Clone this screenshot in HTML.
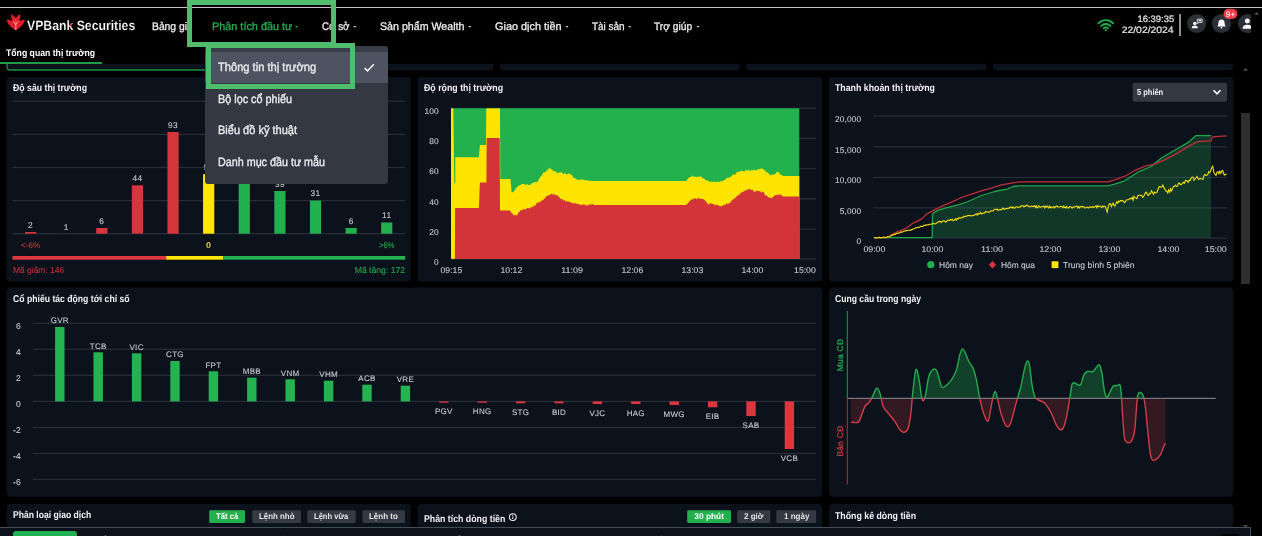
<!DOCTYPE html>
<html><head><meta charset="utf-8"><title>VPBank Securities</title>
<style>
html,body{margin:0;padding:0;background:#000;}
body{width:1262px;height:536px;overflow:hidden;position:relative;font-family:"Liberation Sans", sans-serif;}
.t{position:absolute;white-space:nowrap;line-height:1;font-family:"Liberation Sans", sans-serif;text-rendering:geometricPrecision;}
#main{position:absolute;left:0;top:0;width:1251.2px;height:536px;overflow:hidden;will-change:transform;}
</style></head><body>
<div style="position:absolute;left:0;top:7px;width:1262px;height:1px;background:#c4c4c4"></div>
<div id="main">
<svg style="position:absolute;left:0;top:0" width="1262" height="536" viewBox="0 0 1262 536">
<rect x="7.00" y="40.00" width="239.20" height="30.00" rx="3" fill="#0b121c" stroke="#1c8f40" stroke-width="1.3"/>
<rect x="253.30" y="40.00" width="239.80" height="30.20" rx="3" fill="#0b121c"/>
<rect x="499.90" y="40.00" width="239.80" height="30.20" rx="3" fill="#0b121c"/>
<rect x="746.50" y="40.00" width="239.80" height="30.20" rx="3" fill="#0b121c"/>
<rect x="993.10" y="40.00" width="239.80" height="30.20" rx="3" fill="#0b121c"/>
<rect x="0.00" y="8.00" width="1262.00" height="55.80" fill="#000"/>
<rect x="0.00" y="62.00" width="102.00" height="2.00" fill="#1f9d46"/>
<rect x="6.70" y="77.00" width="404.00" height="204.60" rx="4" fill="#0b121c"/>
<rect x="417.60" y="77.00" width="404.60" height="204.60" rx="4" fill="#0b121c"/>
<rect x="829.00" y="77.00" width="404.30" height="204.60" rx="4" fill="#0b121c"/>
<rect x="6.70" y="287.60" width="815.50" height="209.10" rx="4" fill="#0b121c"/>
<rect x="829.00" y="287.60" width="404.30" height="209.10" rx="4" fill="#0b121c"/>
<rect x="6.70" y="504.00" width="404.00" height="40.00" rx="4" fill="#0b121c"/>
<rect x="417.60" y="504.00" width="404.60" height="40.00" rx="4" fill="#0b121c"/>
<rect x="829.00" y="504.00" width="404.30" height="40.00" rx="4" fill="#0b121c"/>
<rect x="12.50" y="100.55" width="392.50" height="1.30" fill="#262c38"/>
<rect x="12.50" y="133.75" width="392.50" height="1.30" fill="#262c38"/>
<rect x="12.50" y="166.85" width="392.50" height="1.30" fill="#262c38"/>
<rect x="12.50" y="199.95" width="392.50" height="1.30" fill="#262c38"/>
<rect x="12.50" y="233.05" width="392.50" height="1.30" fill="#262c38"/>
<rect x="25.00" y="232.00" width="11.20" height="1.70" fill="#d6353d"/>
<rect x="60.62" y="233.60" width="11.20" height="0.10" fill="#d6353d"/>
<rect x="96.23" y="228.00" width="11.20" height="5.70" fill="#d6353d"/>
<rect x="131.84" y="185.30" width="11.20" height="48.40" fill="#d6353d"/>
<rect x="167.46" y="132.00" width="11.20" height="101.70" fill="#d6353d"/>
<rect x="203.08" y="174.20" width="11.20" height="59.50" fill="#ffe500"/>
<rect x="238.69" y="140.70" width="11.20" height="93.00" fill="#22b04e"/>
<rect x="274.31" y="191.00" width="11.20" height="42.70" fill="#22b04e"/>
<rect x="309.92" y="200.50" width="11.20" height="33.20" fill="#22b04e"/>
<rect x="345.54" y="228.00" width="11.20" height="5.70" fill="#22b04e"/>
<rect x="381.15" y="222.50" width="11.20" height="11.20" fill="#22b04e"/>
<rect x="12.50" y="256.00" width="153.70" height="3.70" fill="#e2363f"/>
<rect x="166.20" y="256.00" width="57.10" height="3.70" fill="#ffe500"/>
<rect x="223.30" y="256.00" width="181.90" height="3.70" fill="#24b350"/>
<rect x="451.00" y="107.65" width="365.00" height="1.30" fill="#262c38"/>
<rect x="451.00" y="137.75" width="365.00" height="1.30" fill="#262c38"/>
<rect x="451.00" y="167.95" width="365.00" height="1.30" fill="#262c38"/>
<rect x="451.00" y="198.25" width="365.00" height="1.30" fill="#262c38"/>
<rect x="451.00" y="228.45" width="365.00" height="1.30" fill="#262c38"/>
<rect x="451.00" y="258.35" width="365.00" height="1.30" fill="#262c38"/>
<rect x="1132.70" y="82.70" width="94.30" height="19.00" rx="2" fill="#343842"/>
<rect x="873.30" y="115.30" width="353.50" height="1.30" fill="#262c38"/>
<rect x="873.30" y="146.20" width="353.50" height="1.30" fill="#262c38"/>
<rect x="873.30" y="176.80" width="353.50" height="1.30" fill="#262c38"/>
<rect x="873.30" y="207.20" width="353.50" height="1.30" fill="#262c38"/>
<rect x="873.30" y="237.40" width="353.50" height="1.30" fill="#262c38"/>
<rect x="33.00" y="322.65" width="783.00" height="1.30" fill="#262c38"/>
<rect x="33.00" y="348.65" width="783.00" height="1.30" fill="#262c38"/>
<rect x="33.00" y="374.65" width="783.00" height="1.30" fill="#262c38"/>
<rect x="33.00" y="400.75" width="783.00" height="1.30" fill="#262c38"/>
<rect x="33.00" y="426.85" width="783.00" height="1.30" fill="#262c38"/>
<rect x="33.00" y="452.85" width="783.00" height="1.30" fill="#262c38"/>
<rect x="33.00" y="478.75" width="783.00" height="1.30" fill="#262c38"/>
<rect x="55.10" y="327.00" width="9.40" height="74.40" fill="#24b350"/>
<rect x="93.50" y="352.30" width="9.40" height="49.10" fill="#24b350"/>
<rect x="131.90" y="353.30" width="9.40" height="48.10" fill="#24b350"/>
<rect x="170.30" y="361.00" width="9.40" height="40.40" fill="#24b350"/>
<rect x="208.70" y="371.30" width="9.40" height="30.10" fill="#24b350"/>
<rect x="247.10" y="377.70" width="9.40" height="23.70" fill="#24b350"/>
<rect x="285.50" y="379.30" width="9.40" height="22.10" fill="#24b350"/>
<rect x="323.90" y="380.70" width="9.40" height="20.70" fill="#24b350"/>
<rect x="362.30" y="384.70" width="9.40" height="16.70" fill="#24b350"/>
<rect x="400.70" y="385.70" width="9.40" height="15.70" fill="#24b350"/>
<rect x="439.10" y="401.40" width="9.40" height="1.30" fill="#dc363f"/>
<rect x="477.50" y="401.40" width="9.40" height="1.30" fill="#dc363f"/>
<rect x="515.90" y="401.40" width="9.40" height="1.90" fill="#dc363f"/>
<rect x="554.30" y="401.40" width="9.40" height="1.90" fill="#dc363f"/>
<rect x="592.70" y="401.40" width="9.40" height="2.60" fill="#dc363f"/>
<rect x="631.10" y="401.40" width="9.40" height="2.60" fill="#dc363f"/>
<rect x="669.50" y="401.40" width="9.40" height="3.60" fill="#dc363f"/>
<rect x="707.90" y="401.40" width="9.40" height="5.90" fill="#dc363f"/>
<rect x="746.30" y="401.40" width="9.40" height="14.60" fill="#dc363f"/>
<rect x="784.70" y="401.40" width="9.40" height="47.60" fill="#dc363f"/>
<rect x="209.20" y="510.30" width="35.80" height="12.60" rx="1.3" fill="#22b04e"/>
<rect x="252.20" y="510.30" width="48.80" height="12.60" rx="1.3" fill="#353943"/>
<rect x="307.20" y="510.30" width="48.60" height="12.60" rx="1.3" fill="#353943"/>
<rect x="362.50" y="510.30" width="42.50" height="12.60" rx="1.3" fill="#353943"/>
<rect x="687.20" y="510.30" width="43.80" height="12.60" rx="1.3" fill="#22b04e"/>
<rect x="737.20" y="510.30" width="33.10" height="12.60" rx="1.3" fill="#353943"/>
<rect x="776.30" y="510.30" width="39.90" height="12.60" rx="1.3" fill="#353943"/>
</svg>
<span class="t" style="left:839.5px;top:354.5px;font-size:8.4px;color:#22a74a;transform:translate(-50%,-50%) rotate(-90deg);letter-spacing:0.3px;-webkit-text-stroke:0.3px;">Mua CĐ</span>
<span class="t" style="left:839.5px;top:441px;font-size:8.4px;color:#c83a42;transform:translate(-50%,-50%) rotate(-90deg);letter-spacing:0.3px;-webkit-text-stroke:0.3px;">Bán CĐ</span>
<svg style="position:absolute;left:0;top:0" width="1262" height="536" viewBox="0 0 1262 536">
<rect x="451" y="108.3" width="348.3" height="150.7" fill="#22b14d"/>
<clipPath id="c2"><rect x="451" y="108.3" width="348.3" height="150.7"/></clipPath><g clip-path="url(#c2)">
<polygon points="450.9,258.7 450.9,108.3 453.3,108.3 454.3,183.2 455.3,183.2 455.3,157.2 478.9,157.2 479.9,144.9 486.0,144.9 486.3,108.3 500.0,108.3 500.3,178.9 510.5,178.9 511.5,191.5 513.2,192.5 514.3,190.7 515.4,189.0 516.5,187.5 517.5,186.9 518.5,185.5 519.5,185.7 520.5,185.0 521.5,183.9 522.5,183.8 523.5,184.1 524.5,184.0 525.5,184.7 526.5,185.1 527.5,184.0 528.5,184.9 529.5,185.0 530.5,184.8 531.5,183.6 532.5,183.0 533.5,182.6 534.5,182.2 535.5,181.9 536.5,182.4 537.6,181.4 538.7,179.8 539.8,177.5 540.9,176.4 542.0,175.2 543.1,172.4 544.2,172.5 545.3,172.0 546.4,170.8 547.5,170.0 548.7,168.8 549.8,167.6 550.8,169.4 551.8,169.0 552.8,170.6 553.8,171.5 555.1,171.2 556.4,172.0 557.5,173.3 558.6,173.1 559.8,172.2 560.9,172.3 562.0,172.6 563.1,174.3 564.1,174.1 565.1,172.8 566.1,174.2 567.1,174.5 568.1,173.8 569.1,173.2 570.1,174.5 571.1,174.5 572.1,175.1 573.1,177.8 574.2,177.8 575.3,178.2 576.4,179.7 577.5,178.9 578.6,180.0 579.7,180.2 580.8,179.2 581.9,179.5 583.0,179.8 584.1,179.8 585.1,180.5 586.2,180.0 587.2,180.4 588.2,179.9 589.3,181.5 590.3,180.5 591.4,180.9 592.0,180.9 686.2,180.9 688.9,177.4 690.0,177.0 691.1,177.0 692.2,175.4 693.4,176.8 694.5,176.4 695.7,176.8 696.9,177.2 697.9,176.2 699.0,177.1 700.1,176.6 701.2,176.2 702.8,178.8 703.8,178.1 704.8,179.2 705.8,180.2 706.8,180.4 707.8,180.5 708.8,181.2 709.8,181.5 710.8,182.2 711.8,181.1 712.8,182.3 713.8,181.6 714.8,181.5 715.8,182.3 716.8,181.7 717.8,181.6 718.8,181.9 719.8,182.1 720.8,181.0 721.8,181.2 722.8,180.9 723.8,180.2 724.8,179.9 725.8,178.8 726.8,178.3 727.8,177.5 728.8,177.9 729.8,176.9 730.8,176.7 731.8,176.3 732.8,174.4 733.8,174.5 734.8,174.8 735.8,174.1 736.8,172.3 737.8,171.8 738.8,172.1 739.8,171.0 740.8,171.0 741.8,170.4 742.8,171.2 743.8,171.3 744.8,171.4 745.8,169.8 746.8,170.8 747.8,170.5 748.8,169.4 749.8,170.8 750.8,170.9 751.8,169.4 752.8,170.8 753.8,169.6 754.8,169.7 755.8,170.7 756.8,170.3 757.8,168.9 758.8,169.3 759.8,169.3 760.7,168.8 761.7,168.4 762.7,168.5 763.7,170.2 764.7,169.7 765.7,171.7 766.7,172.4 767.8,172.3 768.9,173.7 770.0,175.0 771.1,175.6 772.2,174.0 773.3,175.2 774.4,174.1 775.5,174.0 776.6,171.9 777.7,171.7 778.9,172.3 780.0,174.8 781.4,174.6 782.7,175.9 783.4,175.9 800.0,175.9 800.0,258.7" fill="#ffe400"/>
<polygon points="454.9,259.1 455.1,208.1 478.9,208.1 479.9,182.5 486.4,182.5 486.7,137.9 499.7,137.9 500.0,210.5 509.8,210.5 511.5,213.1 512.7,213.8 513.8,215.8 514.9,214.6 516.0,215.5 517.2,215.2 518.5,212.6 519.8,211.5 520.8,210.1 521.8,210.5 522.8,209.4 523.8,209.1 524.8,209.3 525.8,209.8 526.9,208.0 527.9,207.8 529.0,208.2 530.0,208.5 531.0,207.4 532.1,206.6 533.1,207.4 534.1,204.9 535.1,205.9 536.1,204.1 537.1,203.1 538.1,202.4 539.1,202.1 540.1,202.5 541.1,200.5 542.1,200.7 543.1,200.1 544.1,198.8 545.1,198.3 546.1,196.6 547.1,195.8 548.1,195.2 549.2,195.6 550.3,194.6 551.4,193.8 552.4,194.5 553.4,194.3 554.4,194.2 555.4,195.3 556.4,195.2 557.4,195.1 558.4,196.6 559.4,197.3 560.4,198.8 561.4,199.3 562.4,198.9 563.4,200.9 564.4,199.7 565.4,200.8 566.4,202.0 567.5,201.0 568.6,201.9 569.7,201.2 570.8,202.7 572.0,203.1 573.1,203.0 574.1,203.8 575.1,202.8 576.1,203.8 577.1,203.8 578.1,204.0 579.1,203.9 580.0,204.9 581.0,205.3 582.0,204.6 583.0,205.1 584.0,203.9 585.0,205.2 586.0,205.0 587.0,205.7 588.0,205.3 589.0,204.2 590.0,204.4 591.0,204.9 592.0,203.6 593.0,204.5 593.7,205.1 686.2,205.1 688.9,202.1 689.9,200.7 690.9,199.9 691.9,199.0 692.9,199.7 693.9,198.3 694.9,198.4 695.9,198.5 696.9,199.4 697.9,197.7 698.9,198.3 699.9,198.5 700.8,199.1 701.8,198.9 702.8,198.9 704.2,199.4 705.5,201.3 706.7,202.2 707.8,204.3 708.9,204.6 710.1,203.2 711.2,203.5 712.3,203.8 713.4,204.1 714.5,204.8 715.5,205.3 716.5,204.9 717.5,204.6 718.5,205.7 719.5,205.9 720.5,206.0 721.5,206.5 722.5,205.7 723.5,205.1 724.5,205.1 725.5,204.7 726.5,203.0 727.5,204.2 728.5,203.5 729.5,203.2 730.5,202.4 731.5,200.8 732.5,200.1 733.5,198.8 734.5,199.1 735.5,197.2 736.5,196.4 737.5,195.8 738.5,195.0 739.5,194.5 740.4,193.3 741.4,192.5 742.4,192.1 743.4,191.4 744.4,191.2 745.6,189.8 746.7,190.7 747.8,189.4 748.8,188.7 749.8,189.2 750.8,189.7 751.8,190.0 752.8,189.8 753.8,191.4 754.8,191.9 755.8,191.0 756.8,191.3 757.8,190.7 758.8,190.8 759.8,191.5 760.7,191.4 761.7,192.7 762.7,191.5 763.9,192.3 765.0,195.3 766.1,195.6 767.2,195.7 768.3,197.4 769.4,197.2 770.4,197.8 771.4,198.2 772.4,197.5 773.4,196.7 774.4,195.4 775.4,195.2 776.4,194.5 777.4,195.4 778.4,194.6 779.4,194.7 780.5,194.6 781.6,195.2 782.7,196.5 783.4,196.5 800.0,196.5 800.0,259.1" fill="#d2343a"/>
</g>
<polyline points="1213.5,90.3 1217,93.8 1220.5,90.3" fill="none" stroke="#fff" stroke-width="1.6"/>
<polygon points="873.9,237.7 932.2,237.7 932.5,214.1 936.5,210.8 944.8,208.1 958.1,204.8 968.1,201.5 981.4,195.5 994.7,191.5 1008.0,188.8 1013.0,186.5 1019.7,185.8 1107.9,185.8 1114.5,184.2 1124.5,180.8 1137.8,172.2 1151.1,166.5 1161.1,158.2 1171.1,152.2 1181.1,146.5 1189.4,141.6 1196.0,135.6 1211.0,135.6 1211.0,237.7" fill="rgba(34,176,78,0.24)"/>
<polyline points="873.9,237.7 932.2,237.7 932.5,214.1 936.5,210.8 944.8,208.1 958.1,204.8 968.1,201.5 981.4,195.5 994.7,191.5 1008.0,188.8 1013.0,186.5 1019.7,185.8 1107.9,185.8 1114.5,184.2 1124.5,180.8 1137.8,172.2 1151.1,166.5 1161.1,158.2 1171.1,152.2 1181.1,146.5 1189.4,141.6 1196.0,135.6 1211.0,135.6" fill="none" stroke="#20a548" stroke-width="1.3" stroke-linejoin="round"/>
<polyline points="873.9,237.7 886.6,237.7 896.5,232.1 906.5,228.1 913.2,223.1 921.5,219.1 926.5,214.1 931.5,211.4 941.5,206.4 951.5,202.1 961.4,197.5 971.4,194.1 981.4,190.8 991.4,188.1 1001.4,184.8 1011.4,183.2 1019.7,181.8 1107.9,181.8 1117.8,178.8 1126.2,175.5 1136.1,169.8 1146.1,165.8 1154.5,164.2 1164.4,159.9 1174.4,154.9 1184.4,148.9 1191.1,144.9 1197.7,141.6 1211.0,140.9 1212.4,136.9 1226.7,135.9" fill="none" stroke="#c02f38" stroke-width="1.3" stroke-linejoin="round"/>
<polyline points="873.9,237.7 875.0,237.6 876.0,238.1 877.1,238.0 878.1,237.4 879.2,237.2 880.2,238.0 881.3,237.6 882.3,237.7 883.4,237.1 884.5,237.0 885.5,237.6 886.6,237.4 887.6,236.6 888.7,237.0 889.7,236.4 890.8,236.1 891.9,235.0 892.9,235.4 894.0,234.2 895.0,234.6 896.1,233.8 897.2,233.3 898.2,233.1 899.2,233.2 900.3,232.3 901.3,231.9 902.3,232.1 903.3,231.5 904.4,231.1 905.4,230.9 906.4,230.6 907.4,230.5 908.5,230.3 909.5,230.1 910.5,230.3 911.5,229.7 912.5,229.4 913.6,228.8 914.6,228.6 915.6,227.9 916.6,227.8 917.7,227.3 918.7,227.6 919.7,227.1 920.7,226.4 921.8,226.4 922.8,226.5 923.8,225.4 924.8,225.4 925.9,225.1 927.0,224.9 928.1,225.0 929.2,224.4 930.3,224.2 931.4,224.2 932.5,223.8 933.4,223.3 934.2,224.1 935.1,223.7 936.0,223.4 936.9,222.7 937.8,222.4 938.6,221.6 939.5,221.6 940.4,221.3 941.3,222.6 942.2,221.4 943.0,221.0 943.9,220.7 944.8,221.4 945.6,222.0 946.5,221.5 947.3,220.5 948.1,220.2 949.0,220.1 949.8,220.3 950.6,219.5 951.5,220.0 952.3,219.4 953.1,220.7 954.0,220.6 954.8,219.5 955.6,218.7 956.4,220.1 957.3,218.5 958.1,218.8 958.9,217.5 959.8,218.1 960.6,218.1 961.4,218.0 962.3,217.1 963.1,217.6 963.9,216.3 964.8,216.7 965.6,216.1 966.4,216.5 967.3,215.6 968.1,215.3 968.9,215.7 969.8,215.4 970.6,215.9 971.4,215.6 972.3,215.9 973.1,215.5 973.9,215.4 974.8,214.8 975.6,214.3 976.4,214.0 977.2,215.2 978.1,213.2 978.9,214.2 979.7,213.9 980.6,212.4 981.4,213.9 982.2,213.8 983.1,213.0 983.9,213.1 984.7,213.0 985.6,211.4 986.4,212.0 987.2,211.8 988.1,212.3 988.9,212.0 989.7,211.9 990.6,211.2 991.4,210.8 992.2,211.0 993.1,210.9 993.9,209.8 994.7,209.2 995.5,209.3 996.4,209.7 997.2,209.0 998.0,210.4 998.9,209.7 999.7,209.7 1000.5,209.6 1001.4,209.6 1002.2,209.0 1003.0,207.9 1003.9,209.4 1004.7,209.2 1005.5,208.5 1006.4,208.5 1007.2,208.6 1008.0,208.1 1008.9,208.5 1009.7,207.4 1010.5,206.9 1011.4,207.2 1012.2,208.1 1013.0,206.9 1013.9,207.9 1014.7,208.3 1015.5,207.2 1016.3,206.9 1017.2,207.0 1018.0,207.3 1018.8,207.4 1019.7,207.0 1020.5,206.9 1021.3,205.6 1022.2,205.7 1023.0,205.8 1023.8,206.7 1024.7,206.1 1025.5,206.3 1026.3,205.1 1027.2,205.3 1028.0,205.8 1028.8,206.6 1029.7,206.7 1030.5,206.7 1031.3,205.9 1032.2,206.4 1033.0,206.4 1033.8,206.4 1034.7,205.7 1035.5,207.4 1036.3,205.9 1037.1,207.6 1038.0,207.6 1038.8,205.7 1039.6,206.6 1040.5,207.4 1041.3,206.8 1042.1,206.7 1043.0,206.3 1043.8,206.2 1044.6,207.8 1045.5,206.2 1046.3,207.1 1047.1,206.1 1048.0,207.0 1048.8,207.9 1049.6,206.2 1050.5,207.6 1051.3,207.0 1052.1,207.8 1053.0,207.4 1053.8,206.5 1054.6,207.9 1055.4,207.0 1056.3,206.1 1057.1,206.0 1057.9,207.1 1058.8,207.0 1059.6,206.7 1060.4,206.3 1061.3,206.8 1062.1,206.7 1062.9,207.8 1063.8,206.1 1064.6,207.6 1065.4,207.8 1066.3,206.3 1067.1,208.0 1067.9,207.6 1068.8,208.0 1069.6,206.7 1070.4,206.8 1071.3,206.9 1072.1,208.2 1072.9,207.3 1073.8,206.8 1074.6,207.1 1075.4,206.6 1076.2,206.1 1077.1,206.2 1077.9,207.8 1078.7,206.6 1079.6,207.9 1080.4,206.5 1081.2,206.5 1082.1,207.0 1082.9,206.3 1083.7,206.7 1084.6,207.9 1085.4,207.7 1086.2,207.5 1087.1,207.1 1087.9,207.7 1088.7,207.8 1089.6,206.9 1090.4,207.3 1091.2,206.8 1092.1,207.3 1092.9,206.6 1093.7,207.3 1094.6,207.0 1095.4,206.2 1096.2,205.7 1097.0,207.6 1097.9,205.8 1098.7,206.6 1099.5,206.3 1100.4,206.1 1101.2,207.1 1102.0,207.6 1102.9,206.0 1103.7,206.8 1104.5,206.1 1105.4,206.6 1107.2,212.1 1108.5,205.4 1109.5,203.8 1110.4,203.7 1111.3,206.5 1112.3,204.5 1113.2,203.1 1114.1,205.8 1115.0,206.0 1116.0,203.4 1116.9,201.8 1117.8,203.1 1118.8,201.0 1119.7,201.8 1120.7,200.4 1121.6,200.8 1122.6,200.5 1123.6,201.6 1124.5,202.6 1125.5,201.7 1126.4,200.0 1127.4,199.7 1128.3,199.8 1129.3,198.9 1130.2,198.4 1131.2,198.8 1132.1,197.5 1133.1,200.2 1134.0,196.3 1135.0,197.7 1135.9,197.9 1136.9,198.7 1137.8,195.6 1138.8,195.5 1139.7,195.1 1140.7,195.5 1141.6,195.4 1142.6,197.3 1143.5,196.6 1144.5,194.8 1145.5,192.5 1146.5,192.2 1147.5,194.9 1148.5,195.4 1149.5,193.4 1150.5,193.6 1151.5,190.8 1152.5,192.2 1153.5,194.3 1154.5,192.1 1155.6,192.9 1156.7,192.6 1157.8,189.8 1158.8,187.2 1159.8,186.4 1160.8,187.1 1161.8,186.9 1162.8,185.1 1163.8,187.6 1164.8,188.8 1165.8,190.9 1166.8,191.1 1167.8,192.8 1168.7,189.9 1169.7,192.2 1170.6,188.9 1171.6,191.0 1172.5,188.9 1173.5,186.5 1174.4,186.5 1175.4,185.1 1176.4,186.4 1177.4,186.3 1178.4,183.5 1179.4,183.0 1180.4,184.6 1181.4,184.5 1182.4,183.3 1183.4,182.3 1184.4,183.2 1185.4,180.3 1186.3,180.9 1187.3,180.8 1188.2,182.3 1189.2,180.2 1190.1,180.5 1191.1,178.2 1192.1,177.1 1193.1,177.2 1194.1,180.4 1195.0,179.3 1196.0,177.7 1197.0,176.5 1198.0,178.6 1199.0,179.4 1200.0,178.4 1201.0,178.8 1202.0,179.0 1202.9,179.5 1203.9,175.9 1204.8,174.5 1205.8,175.3 1206.7,175.1 1207.7,174.8 1208.7,171.8 1209.7,172.7 1210.7,170.7 1211.7,167.9 1212.7,166.2 1213.9,172.4 1215.0,174.5 1216.0,175.4 1216.9,172.3 1217.9,171.8 1218.8,173.6 1219.8,171.1 1220.8,173.5 1221.7,171.0 1222.7,170.5 1224.3,175.2 1225.5,174.3 1226.7,174.2" fill="none" stroke="#f2dc10" stroke-width="1.1" stroke-linejoin="miter"/>
<circle cx="930.8" cy="264.7" r="3.6" fill="#22b04e"/>
<polygon points="992.5,261 996.2,264.7 992.5,268.4 988.8,264.7" fill="#d6353d"/>
<rect x="1051.6" y="261.3" width="6.8" height="6.8" fill="#ffe500"/>
<clipPath id="up"><rect x="829" y="288" width="404" height="110.30000000000001"/></clipPath><clipPath id="dn"><rect x="829" y="398.3" width="404" height="98.69999999999999"/></clipPath>
<path d="M851.0,422.1 C852.2,422.1 856.5,423.3 858.3,422.1 C860.1,420.9 860.5,417.4 861.6,414.8 C862.7,412.2 863.5,408.7 864.9,406.5 C866.3,404.2 868.5,403.4 869.9,401.5 C871.3,399.5 872.1,397.0 873.3,394.8 C874.4,392.6 875.5,388.4 876.6,388.2 C877.7,387.9 878.8,390.1 879.9,393.2 C881.0,396.2 881.8,403.1 883.2,406.5 C884.6,409.8 886.3,410.6 888.2,413.1 C890.2,415.6 892.9,418.7 894.9,421.4 C896.8,424.2 898.3,427.9 899.9,429.8 C901.4,431.6 902.8,432.7 904.2,432.4 C905.6,432.1 907.1,431.3 908.2,428.1 C909.3,424.9 910.1,418.7 910.9,413.1 C911.6,407.6 911.9,401.2 912.5,394.8 C913.2,388.4 914.2,379.1 914.9,374.9 C915.5,370.6 915.8,369.0 916.5,369.5 C917.2,370.1 918.0,373.7 918.8,378.2 C919.7,382.7 920.7,392.7 921.5,396.5 C922.3,400.3 922.8,401.1 923.5,400.8 C924.2,400.5 924.6,398.9 925.5,394.8 C926.4,390.8 927.7,380.6 928.8,376.5 C929.9,372.4 931.0,371.4 932.2,370.2 C933.3,369.0 934.8,368.7 935.8,369.5 C936.8,370.3 937.2,372.0 938.1,374.9 C939.1,377.7 940.4,384.6 941.5,386.5 C942.6,388.4 943.1,387.6 944.8,386.5 C946.5,385.4 949.5,382.6 951.5,379.8 C953.4,377.1 955.1,374.0 956.4,369.9 C957.8,365.7 958.8,358.4 959.8,354.9 C960.8,351.4 961.5,349.2 962.4,348.9 C963.4,348.6 964.4,351.1 965.4,353.2 C966.5,355.3 967.5,359.0 968.8,361.5 C970.0,364.0 971.8,365.1 973.1,368.2 C974.4,371.2 975.3,374.9 976.4,379.8 C977.5,384.8 978.6,392.9 979.7,398.1 C980.9,403.4 982.0,407.9 983.1,411.5 C984.2,415.1 985.5,418.4 986.4,419.8 C987.3,421.2 987.9,422.3 988.7,419.8 C989.6,417.3 990.5,409.2 991.4,404.8 C992.3,400.4 993.3,395.3 994.1,393.2 C994.8,391.0 995.2,391.3 995.7,392.2 C996.3,393.0 996.4,394.4 997.4,398.1 C998.3,401.9 1000.0,410.3 1001.4,414.8 C1002.7,419.2 1004.3,422.8 1005.4,424.8 C1006.5,426.8 1007.1,427.0 1008.0,426.8 C1008.9,426.5 1009.6,426.2 1010.7,423.1 C1011.8,420.0 1013.5,412.6 1014.7,408.1 C1015.9,403.7 1016.9,400.4 1018.0,396.5 C1019.1,392.6 1020.2,389.5 1021.3,384.8 C1022.4,380.1 1023.7,372.2 1024.7,368.2 C1025.7,364.2 1026.5,361.2 1027.3,360.9 C1028.2,360.6 1028.9,362.5 1029.7,366.5 C1030.4,370.5 1031.2,379.8 1032.0,384.8 C1032.8,389.8 1033.7,394.0 1034.7,396.5 C1035.6,399.0 1036.3,398.7 1038.0,399.8 C1039.6,400.9 1042.4,400.9 1044.6,403.1 C1046.9,405.4 1049.3,409.5 1051.3,413.1 C1053.2,416.7 1054.7,422.0 1056.3,424.8 C1057.8,427.5 1059.3,429.5 1060.6,429.8 C1061.9,430.0 1062.8,429.2 1063.9,426.4 C1065.0,423.7 1066.2,418.4 1067.3,413.1 C1068.3,407.9 1069.5,399.5 1070.3,394.8 C1071.0,390.1 1071.3,386.8 1071.9,384.8 C1072.5,382.8 1073.0,382.9 1073.9,382.8 C1074.8,382.7 1076.1,383.8 1077.2,384.2 C1078.4,384.5 1079.5,386.4 1080.6,384.8 C1081.7,383.3 1082.8,377.1 1083.9,374.9 C1085.0,372.6 1085.7,372.1 1087.2,371.5 C1088.7,371.0 1091.4,372.2 1092.9,371.5 C1094.4,370.9 1095.1,368.6 1096.2,367.5 C1097.3,366.4 1098.6,363.9 1099.5,364.9 C1100.5,365.8 1101.0,368.7 1101.9,373.2 C1102.7,377.6 1103.7,387.4 1104.5,391.5 C1105.4,395.5 1106.0,397.2 1106.9,397.5 C1107.7,397.8 1108.5,395.0 1109.5,393.2 C1110.5,391.3 1111.6,387.8 1112.9,386.5 C1114.1,385.2 1116.0,385.7 1117.2,385.5 C1118.4,385.3 1119.5,383.4 1120.2,385.5 C1120.9,387.6 1121.1,392.7 1121.5,398.1 C1121.9,403.6 1122.3,411.5 1122.8,418.1 C1123.3,424.8 1123.8,434.0 1124.5,438.1 C1125.2,442.1 1126.1,441.8 1127.2,442.4 C1128.3,443.0 1129.9,443.2 1131.2,441.4 C1132.4,439.6 1133.6,437.0 1134.5,431.4 C1135.4,425.9 1135.9,414.2 1136.5,408.1 C1137.0,402.0 1137.2,397.4 1137.8,394.8 C1138.4,392.2 1139.3,392.5 1140.1,392.5 C1141.0,392.5 1142.0,392.8 1142.8,394.8 C1143.6,396.9 1144.3,398.7 1145.1,404.8 C1146.0,410.9 1146.9,423.1 1147.8,431.4 C1148.7,439.7 1149.6,449.9 1150.5,454.7 C1151.3,459.5 1151.8,459.3 1152.8,460.0 C1153.7,460.8 1154.8,460.3 1156.1,459.4 C1157.4,458.5 1159.2,456.9 1160.4,454.7 C1161.7,452.6 1162.9,448.3 1163.8,446.4 C1164.6,444.5 1165.2,443.6 1165.4,443.1 L1165.4,398.3 L851.0,398.3 Z" fill="rgba(34,176,78,0.30)" clip-path="url(#up)"/>
<line x1="847.3" y1="398.3" x2="1215.7" y2="398.3" stroke="#747a83" stroke-width="1.2"/>
<path d="M851.0,422.1 C852.2,422.1 856.5,423.3 858.3,422.1 C860.1,420.9 860.5,417.4 861.6,414.8 C862.7,412.2 863.5,408.7 864.9,406.5 C866.3,404.2 868.5,403.4 869.9,401.5 C871.3,399.5 872.1,397.0 873.3,394.8 C874.4,392.6 875.5,388.4 876.6,388.2 C877.7,387.9 878.8,390.1 879.9,393.2 C881.0,396.2 881.8,403.1 883.2,406.5 C884.6,409.8 886.3,410.6 888.2,413.1 C890.2,415.6 892.9,418.7 894.9,421.4 C896.8,424.2 898.3,427.9 899.9,429.8 C901.4,431.6 902.8,432.7 904.2,432.4 C905.6,432.1 907.1,431.3 908.2,428.1 C909.3,424.9 910.1,418.7 910.9,413.1 C911.6,407.6 911.9,401.2 912.5,394.8 C913.2,388.4 914.2,379.1 914.9,374.9 C915.5,370.6 915.8,369.0 916.5,369.5 C917.2,370.1 918.0,373.7 918.8,378.2 C919.7,382.7 920.7,392.7 921.5,396.5 C922.3,400.3 922.8,401.1 923.5,400.8 C924.2,400.5 924.6,398.9 925.5,394.8 C926.4,390.8 927.7,380.6 928.8,376.5 C929.9,372.4 931.0,371.4 932.2,370.2 C933.3,369.0 934.8,368.7 935.8,369.5 C936.8,370.3 937.2,372.0 938.1,374.9 C939.1,377.7 940.4,384.6 941.5,386.5 C942.6,388.4 943.1,387.6 944.8,386.5 C946.5,385.4 949.5,382.6 951.5,379.8 C953.4,377.1 955.1,374.0 956.4,369.9 C957.8,365.7 958.8,358.4 959.8,354.9 C960.8,351.4 961.5,349.2 962.4,348.9 C963.4,348.6 964.4,351.1 965.4,353.2 C966.5,355.3 967.5,359.0 968.8,361.5 C970.0,364.0 971.8,365.1 973.1,368.2 C974.4,371.2 975.3,374.9 976.4,379.8 C977.5,384.8 978.6,392.9 979.7,398.1 C980.9,403.4 982.0,407.9 983.1,411.5 C984.2,415.1 985.5,418.4 986.4,419.8 C987.3,421.2 987.9,422.3 988.7,419.8 C989.6,417.3 990.5,409.2 991.4,404.8 C992.3,400.4 993.3,395.3 994.1,393.2 C994.8,391.0 995.2,391.3 995.7,392.2 C996.3,393.0 996.4,394.4 997.4,398.1 C998.3,401.9 1000.0,410.3 1001.4,414.8 C1002.7,419.2 1004.3,422.8 1005.4,424.8 C1006.5,426.8 1007.1,427.0 1008.0,426.8 C1008.9,426.5 1009.6,426.2 1010.7,423.1 C1011.8,420.0 1013.5,412.6 1014.7,408.1 C1015.9,403.7 1016.9,400.4 1018.0,396.5 C1019.1,392.6 1020.2,389.5 1021.3,384.8 C1022.4,380.1 1023.7,372.2 1024.7,368.2 C1025.7,364.2 1026.5,361.2 1027.3,360.9 C1028.2,360.6 1028.9,362.5 1029.7,366.5 C1030.4,370.5 1031.2,379.8 1032.0,384.8 C1032.8,389.8 1033.7,394.0 1034.7,396.5 C1035.6,399.0 1036.3,398.7 1038.0,399.8 C1039.6,400.9 1042.4,400.9 1044.6,403.1 C1046.9,405.4 1049.3,409.5 1051.3,413.1 C1053.2,416.7 1054.7,422.0 1056.3,424.8 C1057.8,427.5 1059.3,429.5 1060.6,429.8 C1061.9,430.0 1062.8,429.2 1063.9,426.4 C1065.0,423.7 1066.2,418.4 1067.3,413.1 C1068.3,407.9 1069.5,399.5 1070.3,394.8 C1071.0,390.1 1071.3,386.8 1071.9,384.8 C1072.5,382.8 1073.0,382.9 1073.9,382.8 C1074.8,382.7 1076.1,383.8 1077.2,384.2 C1078.4,384.5 1079.5,386.4 1080.6,384.8 C1081.7,383.3 1082.8,377.1 1083.9,374.9 C1085.0,372.6 1085.7,372.1 1087.2,371.5 C1088.7,371.0 1091.4,372.2 1092.9,371.5 C1094.4,370.9 1095.1,368.6 1096.2,367.5 C1097.3,366.4 1098.6,363.9 1099.5,364.9 C1100.5,365.8 1101.0,368.7 1101.9,373.2 C1102.7,377.6 1103.7,387.4 1104.5,391.5 C1105.4,395.5 1106.0,397.2 1106.9,397.5 C1107.7,397.8 1108.5,395.0 1109.5,393.2 C1110.5,391.3 1111.6,387.8 1112.9,386.5 C1114.1,385.2 1116.0,385.7 1117.2,385.5 C1118.4,385.3 1119.5,383.4 1120.2,385.5 C1120.9,387.6 1121.1,392.7 1121.5,398.1 C1121.9,403.6 1122.3,411.5 1122.8,418.1 C1123.3,424.8 1123.8,434.0 1124.5,438.1 C1125.2,442.1 1126.1,441.8 1127.2,442.4 C1128.3,443.0 1129.9,443.2 1131.2,441.4 C1132.4,439.6 1133.6,437.0 1134.5,431.4 C1135.4,425.9 1135.9,414.2 1136.5,408.1 C1137.0,402.0 1137.2,397.4 1137.8,394.8 C1138.4,392.2 1139.3,392.5 1140.1,392.5 C1141.0,392.5 1142.0,392.8 1142.8,394.8 C1143.6,396.9 1144.3,398.7 1145.1,404.8 C1146.0,410.9 1146.9,423.1 1147.8,431.4 C1148.7,439.7 1149.6,449.9 1150.5,454.7 C1151.3,459.5 1151.8,459.3 1152.8,460.0 C1153.7,460.8 1154.8,460.3 1156.1,459.4 C1157.4,458.5 1159.2,456.9 1160.4,454.7 C1161.7,452.6 1162.9,448.3 1163.8,446.4 C1164.6,444.5 1165.2,443.6 1165.4,443.1 L1165.4,398.3 L851.0,398.3 Z" fill="rgba(214,53,61,0.20)" clip-path="url(#dn)"/>
<path d="M851.0,422.1 C852.2,422.1 856.5,423.3 858.3,422.1 C860.1,420.9 860.5,417.4 861.6,414.8 C862.7,412.2 863.5,408.7 864.9,406.5 C866.3,404.2 868.5,403.4 869.9,401.5 C871.3,399.5 872.1,397.0 873.3,394.8 C874.4,392.6 875.5,388.4 876.6,388.2 C877.7,387.9 878.8,390.1 879.9,393.2 C881.0,396.2 881.8,403.1 883.2,406.5 C884.6,409.8 886.3,410.6 888.2,413.1 C890.2,415.6 892.9,418.7 894.9,421.4 C896.8,424.2 898.3,427.9 899.9,429.8 C901.4,431.6 902.8,432.7 904.2,432.4 C905.6,432.1 907.1,431.3 908.2,428.1 C909.3,424.9 910.1,418.7 910.9,413.1 C911.6,407.6 911.9,401.2 912.5,394.8 C913.2,388.4 914.2,379.1 914.9,374.9 C915.5,370.6 915.8,369.0 916.5,369.5 C917.2,370.1 918.0,373.7 918.8,378.2 C919.7,382.7 920.7,392.7 921.5,396.5 C922.3,400.3 922.8,401.1 923.5,400.8 C924.2,400.5 924.6,398.9 925.5,394.8 C926.4,390.8 927.7,380.6 928.8,376.5 C929.9,372.4 931.0,371.4 932.2,370.2 C933.3,369.0 934.8,368.7 935.8,369.5 C936.8,370.3 937.2,372.0 938.1,374.9 C939.1,377.7 940.4,384.6 941.5,386.5 C942.6,388.4 943.1,387.6 944.8,386.5 C946.5,385.4 949.5,382.6 951.5,379.8 C953.4,377.1 955.1,374.0 956.4,369.9 C957.8,365.7 958.8,358.4 959.8,354.9 C960.8,351.4 961.5,349.2 962.4,348.9 C963.4,348.6 964.4,351.1 965.4,353.2 C966.5,355.3 967.5,359.0 968.8,361.5 C970.0,364.0 971.8,365.1 973.1,368.2 C974.4,371.2 975.3,374.9 976.4,379.8 C977.5,384.8 978.6,392.9 979.7,398.1 C980.9,403.4 982.0,407.9 983.1,411.5 C984.2,415.1 985.5,418.4 986.4,419.8 C987.3,421.2 987.9,422.3 988.7,419.8 C989.6,417.3 990.5,409.2 991.4,404.8 C992.3,400.4 993.3,395.3 994.1,393.2 C994.8,391.0 995.2,391.3 995.7,392.2 C996.3,393.0 996.4,394.4 997.4,398.1 C998.3,401.9 1000.0,410.3 1001.4,414.8 C1002.7,419.2 1004.3,422.8 1005.4,424.8 C1006.5,426.8 1007.1,427.0 1008.0,426.8 C1008.9,426.5 1009.6,426.2 1010.7,423.1 C1011.8,420.0 1013.5,412.6 1014.7,408.1 C1015.9,403.7 1016.9,400.4 1018.0,396.5 C1019.1,392.6 1020.2,389.5 1021.3,384.8 C1022.4,380.1 1023.7,372.2 1024.7,368.2 C1025.7,364.2 1026.5,361.2 1027.3,360.9 C1028.2,360.6 1028.9,362.5 1029.7,366.5 C1030.4,370.5 1031.2,379.8 1032.0,384.8 C1032.8,389.8 1033.7,394.0 1034.7,396.5 C1035.6,399.0 1036.3,398.7 1038.0,399.8 C1039.6,400.9 1042.4,400.9 1044.6,403.1 C1046.9,405.4 1049.3,409.5 1051.3,413.1 C1053.2,416.7 1054.7,422.0 1056.3,424.8 C1057.8,427.5 1059.3,429.5 1060.6,429.8 C1061.9,430.0 1062.8,429.2 1063.9,426.4 C1065.0,423.7 1066.2,418.4 1067.3,413.1 C1068.3,407.9 1069.5,399.5 1070.3,394.8 C1071.0,390.1 1071.3,386.8 1071.9,384.8 C1072.5,382.8 1073.0,382.9 1073.9,382.8 C1074.8,382.7 1076.1,383.8 1077.2,384.2 C1078.4,384.5 1079.5,386.4 1080.6,384.8 C1081.7,383.3 1082.8,377.1 1083.9,374.9 C1085.0,372.6 1085.7,372.1 1087.2,371.5 C1088.7,371.0 1091.4,372.2 1092.9,371.5 C1094.4,370.9 1095.1,368.6 1096.2,367.5 C1097.3,366.4 1098.6,363.9 1099.5,364.9 C1100.5,365.8 1101.0,368.7 1101.9,373.2 C1102.7,377.6 1103.7,387.4 1104.5,391.5 C1105.4,395.5 1106.0,397.2 1106.9,397.5 C1107.7,397.8 1108.5,395.0 1109.5,393.2 C1110.5,391.3 1111.6,387.8 1112.9,386.5 C1114.1,385.2 1116.0,385.7 1117.2,385.5 C1118.4,385.3 1119.5,383.4 1120.2,385.5 C1120.9,387.6 1121.1,392.7 1121.5,398.1 C1121.9,403.6 1122.3,411.5 1122.8,418.1 C1123.3,424.8 1123.8,434.0 1124.5,438.1 C1125.2,442.1 1126.1,441.8 1127.2,442.4 C1128.3,443.0 1129.9,443.2 1131.2,441.4 C1132.4,439.6 1133.6,437.0 1134.5,431.4 C1135.4,425.9 1135.9,414.2 1136.5,408.1 C1137.0,402.0 1137.2,397.4 1137.8,394.8 C1138.4,392.2 1139.3,392.5 1140.1,392.5 C1141.0,392.5 1142.0,392.8 1142.8,394.8 C1143.6,396.9 1144.3,398.7 1145.1,404.8 C1146.0,410.9 1146.9,423.1 1147.8,431.4 C1148.7,439.7 1149.6,449.9 1150.5,454.7 C1151.3,459.5 1151.8,459.3 1152.8,460.0 C1153.7,460.8 1154.8,460.3 1156.1,459.4 C1157.4,458.5 1159.2,456.9 1160.4,454.7 C1161.7,452.6 1162.9,448.3 1163.8,446.4 C1164.6,444.5 1165.2,443.6 1165.4,443.1" fill="none" stroke="#24ab4d" stroke-width="1.4" clip-path="url(#up)"/>
<path d="M851.0,422.1 C852.2,422.1 856.5,423.3 858.3,422.1 C860.1,420.9 860.5,417.4 861.6,414.8 C862.7,412.2 863.5,408.7 864.9,406.5 C866.3,404.2 868.5,403.4 869.9,401.5 C871.3,399.5 872.1,397.0 873.3,394.8 C874.4,392.6 875.5,388.4 876.6,388.2 C877.7,387.9 878.8,390.1 879.9,393.2 C881.0,396.2 881.8,403.1 883.2,406.5 C884.6,409.8 886.3,410.6 888.2,413.1 C890.2,415.6 892.9,418.7 894.9,421.4 C896.8,424.2 898.3,427.9 899.9,429.8 C901.4,431.6 902.8,432.7 904.2,432.4 C905.6,432.1 907.1,431.3 908.2,428.1 C909.3,424.9 910.1,418.7 910.9,413.1 C911.6,407.6 911.9,401.2 912.5,394.8 C913.2,388.4 914.2,379.1 914.9,374.9 C915.5,370.6 915.8,369.0 916.5,369.5 C917.2,370.1 918.0,373.7 918.8,378.2 C919.7,382.7 920.7,392.7 921.5,396.5 C922.3,400.3 922.8,401.1 923.5,400.8 C924.2,400.5 924.6,398.9 925.5,394.8 C926.4,390.8 927.7,380.6 928.8,376.5 C929.9,372.4 931.0,371.4 932.2,370.2 C933.3,369.0 934.8,368.7 935.8,369.5 C936.8,370.3 937.2,372.0 938.1,374.9 C939.1,377.7 940.4,384.6 941.5,386.5 C942.6,388.4 943.1,387.6 944.8,386.5 C946.5,385.4 949.5,382.6 951.5,379.8 C953.4,377.1 955.1,374.0 956.4,369.9 C957.8,365.7 958.8,358.4 959.8,354.9 C960.8,351.4 961.5,349.2 962.4,348.9 C963.4,348.6 964.4,351.1 965.4,353.2 C966.5,355.3 967.5,359.0 968.8,361.5 C970.0,364.0 971.8,365.1 973.1,368.2 C974.4,371.2 975.3,374.9 976.4,379.8 C977.5,384.8 978.6,392.9 979.7,398.1 C980.9,403.4 982.0,407.9 983.1,411.5 C984.2,415.1 985.5,418.4 986.4,419.8 C987.3,421.2 987.9,422.3 988.7,419.8 C989.6,417.3 990.5,409.2 991.4,404.8 C992.3,400.4 993.3,395.3 994.1,393.2 C994.8,391.0 995.2,391.3 995.7,392.2 C996.3,393.0 996.4,394.4 997.4,398.1 C998.3,401.9 1000.0,410.3 1001.4,414.8 C1002.7,419.2 1004.3,422.8 1005.4,424.8 C1006.5,426.8 1007.1,427.0 1008.0,426.8 C1008.9,426.5 1009.6,426.2 1010.7,423.1 C1011.8,420.0 1013.5,412.6 1014.7,408.1 C1015.9,403.7 1016.9,400.4 1018.0,396.5 C1019.1,392.6 1020.2,389.5 1021.3,384.8 C1022.4,380.1 1023.7,372.2 1024.7,368.2 C1025.7,364.2 1026.5,361.2 1027.3,360.9 C1028.2,360.6 1028.9,362.5 1029.7,366.5 C1030.4,370.5 1031.2,379.8 1032.0,384.8 C1032.8,389.8 1033.7,394.0 1034.7,396.5 C1035.6,399.0 1036.3,398.7 1038.0,399.8 C1039.6,400.9 1042.4,400.9 1044.6,403.1 C1046.9,405.4 1049.3,409.5 1051.3,413.1 C1053.2,416.7 1054.7,422.0 1056.3,424.8 C1057.8,427.5 1059.3,429.5 1060.6,429.8 C1061.9,430.0 1062.8,429.2 1063.9,426.4 C1065.0,423.7 1066.2,418.4 1067.3,413.1 C1068.3,407.9 1069.5,399.5 1070.3,394.8 C1071.0,390.1 1071.3,386.8 1071.9,384.8 C1072.5,382.8 1073.0,382.9 1073.9,382.8 C1074.8,382.7 1076.1,383.8 1077.2,384.2 C1078.4,384.5 1079.5,386.4 1080.6,384.8 C1081.7,383.3 1082.8,377.1 1083.9,374.9 C1085.0,372.6 1085.7,372.1 1087.2,371.5 C1088.7,371.0 1091.4,372.2 1092.9,371.5 C1094.4,370.9 1095.1,368.6 1096.2,367.5 C1097.3,366.4 1098.6,363.9 1099.5,364.9 C1100.5,365.8 1101.0,368.7 1101.9,373.2 C1102.7,377.6 1103.7,387.4 1104.5,391.5 C1105.4,395.5 1106.0,397.2 1106.9,397.5 C1107.7,397.8 1108.5,395.0 1109.5,393.2 C1110.5,391.3 1111.6,387.8 1112.9,386.5 C1114.1,385.2 1116.0,385.7 1117.2,385.5 C1118.4,385.3 1119.5,383.4 1120.2,385.5 C1120.9,387.6 1121.1,392.7 1121.5,398.1 C1121.9,403.6 1122.3,411.5 1122.8,418.1 C1123.3,424.8 1123.8,434.0 1124.5,438.1 C1125.2,442.1 1126.1,441.8 1127.2,442.4 C1128.3,443.0 1129.9,443.2 1131.2,441.4 C1132.4,439.6 1133.6,437.0 1134.5,431.4 C1135.4,425.9 1135.9,414.2 1136.5,408.1 C1137.0,402.0 1137.2,397.4 1137.8,394.8 C1138.4,392.2 1139.3,392.5 1140.1,392.5 C1141.0,392.5 1142.0,392.8 1142.8,394.8 C1143.6,396.9 1144.3,398.7 1145.1,404.8 C1146.0,410.9 1146.9,423.1 1147.8,431.4 C1148.7,439.7 1149.6,449.9 1150.5,454.7 C1151.3,459.5 1151.8,459.3 1152.8,460.0 C1153.7,460.8 1154.8,460.3 1156.1,459.4 C1157.4,458.5 1159.2,456.9 1160.4,454.7 C1161.7,452.6 1162.9,448.3 1163.8,446.4 C1164.6,444.5 1165.2,443.6 1165.4,443.1" fill="none" stroke="#cf3e46" stroke-width="1.4" clip-path="url(#dn)"/>
<line x1="847.3" y1="311" x2="847.3" y2="398.3" stroke="#1f9a45" stroke-width="1"/>
<line x1="847.3" y1="398.3" x2="847.3" y2="484.5" stroke="#b02f37" stroke-width="1"/>
<circle cx="512.8" cy="517.1" r="3.4" fill="none" stroke="#f4f4f4" stroke-width="1.05"/><rect x="512.3" y="516.6" width="1" height="2.4" fill="#f4f4f4"/><rect x="512.3" y="515" width="1" height="1" fill="#f4f4f4"/>
<polygon points="353.2,26.1 356.2,26.1 354.7,27.7" fill="#d8d8d8"/>
<polygon points="468.3,26.1 471.3,26.1 469.8,27.7" fill="#d8d8d8"/>
<polygon points="565.5,26.1 568.5,26.1 567,27.7" fill="#d8d8d8"/>
<polygon points="628.2,26.1 631.2,26.1 629.7,27.7" fill="#d8d8d8"/>
<polygon points="696.5,26.1 699.5,26.1 698,27.7" fill="#d8d8d8"/>
</svg>
<span class="t" style="left:28.09px;top:221.00px;font-size:8.3px;color:#c9ccd1;-webkit-text-stroke:0.1px;letter-spacing:0.4px;">2</span>
<span class="t" style="left:63.71px;top:223.00px;font-size:8.3px;color:#c9ccd1;-webkit-text-stroke:0.1px;letter-spacing:0.4px;">1</span>
<span class="t" style="left:99.32px;top:217.00px;font-size:8.3px;color:#c9ccd1;-webkit-text-stroke:0.1px;letter-spacing:0.4px;">6</span>
<span class="t" style="left:132.43px;top:174.00px;font-size:8.3px;color:#c9ccd1;-webkit-text-stroke:0.1px;letter-spacing:0.4px;">44</span>
<span class="t" style="left:168.04px;top:121.00px;font-size:8.3px;color:#c9ccd1;-webkit-text-stroke:0.1px;letter-spacing:0.4px;">93</span>
<span class="t" style="left:203.66px;top:163.00px;font-size:8.3px;color:#c9ccd1;-webkit-text-stroke:0.1px;letter-spacing:0.4px;">54</span>
<span class="t" style="left:239.27px;top:129.00px;font-size:8.3px;color:#c9ccd1;-webkit-text-stroke:0.1px;letter-spacing:0.4px;">85</span>
<span class="t" style="left:274.89px;top:180.00px;font-size:8.3px;color:#c9ccd1;-webkit-text-stroke:0.1px;letter-spacing:0.4px;">39</span>
<span class="t" style="left:310.50px;top:189.00px;font-size:8.3px;color:#c9ccd1;-webkit-text-stroke:0.1px;letter-spacing:0.4px;">31</span>
<span class="t" style="left:348.63px;top:217.00px;font-size:8.3px;color:#c9ccd1;-webkit-text-stroke:0.1px;letter-spacing:0.4px;">6</span>
<span class="t" style="left:382.04px;top:211.00px;font-size:8.3px;color:#c9ccd1;-webkit-text-stroke:0.1px;letter-spacing:0.4px;">11</span>
<span class="t" style="left:20.80px;top:241.00px;font-size:8.3px;color:#cc343c;-webkit-text-stroke:0.1px;transform:scaleX(0.9791);transform-origin:0 0;">&lt;-6%</span>
<span class="t" style="left:205.80px;top:241.00px;font-size:8.5px;color:#e6d43a;font-weight:700;transform:scaleX(1.0561);transform-origin:0 0;">0</span>
<span class="t" style="left:379.20px;top:241.00px;font-size:8.3px;color:#22a84b;-webkit-text-stroke:0.1px;transform:scaleX(0.9202);transform-origin:0 0;">&gt;6%</span>
<span class="t" style="left:13.00px;top:266.00px;font-size:8.6px;color:#bf3039;-webkit-text-stroke:0.1px;transform:scaleX(0.9831);transform-origin:0 0;">Mã giảm: 146</span>
<span class="t" style="left:354.53px;top:266.00px;font-size:8.6px;color:#22a84b;-webkit-text-stroke:0.1px;transform:scaleX(1.0065);transform-origin:100% 0;">Mã tăng: 172</span>
<span class="t" style="left:13.00px;top:84.00px;font-size:9.9px;color:#f2f2f2;font-weight:700;transform:scaleX(0.8826);transform-origin:0 0;">Độ sâu thị trường</span>
<span class="t" style="left:424.20px;top:84.00px;font-size:9.9px;color:#f2f2f2;font-weight:700;transform:scaleX(0.8911);transform-origin:0 0;">Độ rộng thị trường</span>
<span class="t" style="left:835.00px;top:84.00px;font-size:9.9px;color:#f2f2f2;font-weight:700;transform:scaleX(0.8899);transform-origin:0 0;">Thanh khoản thị trường</span>
<span class="t" style="left:12.90px;top:295.00px;font-size:9.9px;color:#f2f2f2;font-weight:700;transform:scaleX(0.8754);transform-origin:0 0;">Cổ phiếu tác động tới chỉ số</span>
<span class="t" style="left:835.00px;top:295.00px;font-size:9.9px;color:#f2f2f2;font-weight:700;transform:scaleX(0.8709);transform-origin:0 0;">Cung cầu trong ngày</span>
<span class="t" style="left:13.00px;top:511.00px;font-size:9.9px;color:#f2f2f2;font-weight:700;transform:scaleX(0.8690);transform-origin:0 0;">Phân loại giao dịch</span>
<span class="t" style="left:424.20px;top:515.00px;font-size:9.9px;color:#f2f2f2;font-weight:700;transform:scaleX(0.8873);transform-origin:0 0;">Phân tích dòng tiền</span>
<span class="t" style="left:835.30px;top:512.00px;font-size:9.9px;color:#f2f2f2;font-weight:700;transform:scaleX(0.8895);transform-origin:0 0;">Thống kê dòng tiền</span>
<span class="t" style="left:424.50px;top:107.00px;font-size:8.3px;color:#c9ccd1;-webkit-text-stroke:0.1px;letter-spacing:0.15px;">100</span>
<span class="t" style="left:429.27px;top:137.00px;font-size:8.3px;color:#c9ccd1;-webkit-text-stroke:0.1px;letter-spacing:0.15px;">80</span>
<span class="t" style="left:429.27px;top:167.00px;font-size:8.3px;color:#c9ccd1;-webkit-text-stroke:0.1px;letter-spacing:0.15px;">60</span>
<span class="t" style="left:429.27px;top:198.00px;font-size:8.3px;color:#c9ccd1;-webkit-text-stroke:0.1px;letter-spacing:0.15px;">40</span>
<span class="t" style="left:429.27px;top:228.00px;font-size:8.3px;color:#c9ccd1;-webkit-text-stroke:0.1px;letter-spacing:0.15px;">20</span>
<span class="t" style="left:434.03px;top:258.00px;font-size:8.3px;color:#c9ccd1;-webkit-text-stroke:0.1px;letter-spacing:0.15px;">0</span>
<span class="t" style="left:440.62px;top:266.00px;font-size:8.3px;color:#c9ccd1;-webkit-text-stroke:0.1px;transform:scaleX(1.0450);transform-origin:50% 0;">09:15</span>
<span class="t" style="left:501.32px;top:266.00px;font-size:8.3px;color:#c9ccd1;-webkit-text-stroke:0.1px;transform:scaleX(1.0450);transform-origin:50% 0;">10:12</span>
<span class="t" style="left:561.92px;top:266.00px;font-size:8.3px;color:#c9ccd1;-webkit-text-stroke:0.1px;transform:scaleX(1.0766);transform-origin:50% 0;">11:09</span>
<span class="t" style="left:621.92px;top:266.00px;font-size:8.3px;color:#c9ccd1;-webkit-text-stroke:0.1px;transform:scaleX(1.0450);transform-origin:50% 0;">12:06</span>
<span class="t" style="left:682.32px;top:266.00px;font-size:8.3px;color:#c9ccd1;-webkit-text-stroke:0.1px;transform:scaleX(1.0450);transform-origin:50% 0;">13:03</span>
<span class="t" style="left:742.32px;top:266.00px;font-size:8.3px;color:#c9ccd1;-webkit-text-stroke:0.1px;transform:scaleX(1.0450);transform-origin:50% 0;">14:00</span>
<span class="t" style="left:794.83px;top:266.00px;font-size:8.3px;color:#c9ccd1;-webkit-text-stroke:0.1px;transform:scaleX(1.0450);transform-origin:100% 0;">15:00</span>
<span class="t" style="left:1136.80px;top:88.00px;font-size:8.6px;color:#f0f0f0;font-weight:700;transform:scaleX(0.8706);transform-origin:0 0;">5 phiên</span>
<span class="t" style="left:835.02px;top:115.00px;font-size:8.3px;color:#c9ccd1;-webkit-text-stroke:0.1px;letter-spacing:0.15px;">20,000</span>
<span class="t" style="left:835.02px;top:146.00px;font-size:8.3px;color:#c9ccd1;-webkit-text-stroke:0.1px;letter-spacing:0.15px;">15,000</span>
<span class="t" style="left:835.02px;top:176.00px;font-size:8.3px;color:#c9ccd1;-webkit-text-stroke:0.1px;letter-spacing:0.15px;">10,000</span>
<span class="t" style="left:839.78px;top:207.00px;font-size:8.3px;color:#c9ccd1;-webkit-text-stroke:0.1px;letter-spacing:0.15px;">5,000</span>
<span class="t" style="left:856.53px;top:237.00px;font-size:8.3px;color:#c9ccd1;-webkit-text-stroke:0.1px;letter-spacing:0.15px;">0</span>
<span class="t" style="left:863.62px;top:245.00px;font-size:8.3px;color:#c9ccd1;-webkit-text-stroke:0.1px;transform:scaleX(1.0594);transform-origin:50% 0;">09:00</span>
<span class="t" style="left:922.32px;top:245.00px;font-size:8.3px;color:#c9ccd1;-webkit-text-stroke:0.1px;transform:scaleX(1.0594);transform-origin:50% 0;">10:00</span>
<span class="t" style="left:981.62px;top:245.00px;font-size:8.3px;color:#c9ccd1;-webkit-text-stroke:0.1px;transform:scaleX(1.0915);transform-origin:50% 0;">11:00</span>
<span class="t" style="left:1039.92px;top:245.00px;font-size:8.3px;color:#c9ccd1;-webkit-text-stroke:0.1px;transform:scaleX(1.0594);transform-origin:50% 0;">12:00</span>
<span class="t" style="left:1098.92px;top:245.00px;font-size:8.3px;color:#c9ccd1;-webkit-text-stroke:0.1px;transform:scaleX(1.0594);transform-origin:50% 0;">13:00</span>
<span class="t" style="left:1157.92px;top:245.00px;font-size:8.3px;color:#c9ccd1;-webkit-text-stroke:0.1px;transform:scaleX(1.0594);transform-origin:50% 0;">14:00</span>
<span class="t" style="left:1205.93px;top:245.00px;font-size:8.3px;color:#c9ccd1;-webkit-text-stroke:0.1px;transform:scaleX(1.0594);transform-origin:100% 0;">15:00</span>
<span class="t" style="left:938.80px;top:261.00px;font-size:8.6px;color:#c9ccd1;-webkit-text-stroke:0.1px;transform:scaleX(0.9886);transform-origin:0 0;">Hôm nay</span>
<span class="t" style="left:1000.80px;top:261.00px;font-size:8.6px;color:#c9ccd1;-webkit-text-stroke:0.1px;transform:scaleX(0.9720);transform-origin:0 0;">Hôm qua</span>
<span class="t" style="left:1063.00px;top:261.00px;font-size:8.6px;color:#c9ccd1;-webkit-text-stroke:0.1px;transform:scaleX(0.9954);transform-origin:0 0;">Trung bình 5 phiên</span>
<span class="t" style="left:16.06px;top:322.00px;font-size:8.5px;color:#c9ccd1;-webkit-text-stroke:0.1px;letter-spacing:0.2px;">6</span>
<span class="t" style="left:16.06px;top:348.00px;font-size:8.5px;color:#c9ccd1;-webkit-text-stroke:0.1px;letter-spacing:0.2px;">4</span>
<span class="t" style="left:16.06px;top:374.00px;font-size:8.5px;color:#c9ccd1;-webkit-text-stroke:0.1px;letter-spacing:0.2px;">2</span>
<span class="t" style="left:16.06px;top:400.00px;font-size:8.5px;color:#c9ccd1;-webkit-text-stroke:0.1px;letter-spacing:0.2px;">0</span>
<span class="t" style="left:13.03px;top:426.00px;font-size:8.5px;color:#c9ccd1;-webkit-text-stroke:0.1px;letter-spacing:0.2px;">-2</span>
<span class="t" style="left:13.03px;top:452.00px;font-size:8.5px;color:#c9ccd1;-webkit-text-stroke:0.1px;letter-spacing:0.2px;">-4</span>
<span class="t" style="left:13.03px;top:478.00px;font-size:8.5px;color:#c9ccd1;-webkit-text-stroke:0.1px;letter-spacing:0.2px;">-6</span>
<span class="t" style="left:50.67px;top:317.00px;font-size:8px;color:#c9ccd1;-webkit-text-stroke:0.1px;letter-spacing:0.3px;">GVR</span>
<span class="t" style="left:89.75px;top:343.00px;font-size:8px;color:#c9ccd1;-webkit-text-stroke:0.1px;letter-spacing:0.3px;">TCB</span>
<span class="t" style="left:129.47px;top:344.00px;font-size:8px;color:#c9ccd1;-webkit-text-stroke:0.1px;letter-spacing:0.3px;">VIC</span>
<span class="t" style="left:166.10px;top:351.00px;font-size:8px;color:#c9ccd1;-webkit-text-stroke:0.1px;letter-spacing:0.3px;">CTG</span>
<span class="t" style="left:205.39px;top:362.00px;font-size:8px;color:#c9ccd1;-webkit-text-stroke:0.1px;letter-spacing:0.3px;">FPT</span>
<span class="t" style="left:242.68px;top:368.00px;font-size:8px;color:#c9ccd1;-webkit-text-stroke:0.1px;letter-spacing:0.3px;">MBB</span>
<span class="t" style="left:280.86px;top:370.00px;font-size:8px;color:#c9ccd1;-webkit-text-stroke:0.1px;letter-spacing:0.3px;">VNM</span>
<span class="t" style="left:319.26px;top:371.00px;font-size:8px;color:#c9ccd1;-webkit-text-stroke:0.1px;letter-spacing:0.3px;">VHM</span>
<span class="t" style="left:358.32px;top:375.00px;font-size:8px;color:#c9ccd1;-webkit-text-stroke:0.1px;letter-spacing:0.3px;">ACB</span>
<span class="t" style="left:396.72px;top:376.00px;font-size:8px;color:#c9ccd1;-webkit-text-stroke:0.1px;letter-spacing:0.3px;">VRE</span>
<span class="t" style="left:434.90px;top:408.00px;font-size:8px;color:#c9ccd1;-webkit-text-stroke:0.1px;letter-spacing:0.3px;">PGV</span>
<span class="t" style="left:472.86px;top:408.00px;font-size:8px;color:#c9ccd1;-webkit-text-stroke:0.1px;letter-spacing:0.3px;">HNG</span>
<span class="t" style="left:511.92px;top:409.00px;font-size:8px;color:#c9ccd1;-webkit-text-stroke:0.1px;letter-spacing:0.3px;">STG</span>
<span class="t" style="left:551.88px;top:409.00px;font-size:8px;color:#c9ccd1;-webkit-text-stroke:0.1px;letter-spacing:0.3px;">BID</span>
<span class="t" style="left:589.39px;top:410.00px;font-size:8px;color:#c9ccd1;-webkit-text-stroke:0.1px;letter-spacing:0.3px;">VJC</span>
<span class="t" style="left:626.67px;top:410.00px;font-size:8px;color:#c9ccd1;-webkit-text-stroke:0.1px;letter-spacing:0.3px;">HAG</span>
<span class="t" style="left:663.53px;top:411.00px;font-size:8px;color:#c9ccd1;-webkit-text-stroke:0.1px;letter-spacing:0.3px;">MWG</span>
<span class="t" style="left:705.70px;top:413.00px;font-size:8px;color:#c9ccd1;-webkit-text-stroke:0.1px;letter-spacing:0.3px;">EIB</span>
<span class="t" style="left:742.54px;top:422.00px;font-size:8px;color:#c9ccd1;-webkit-text-stroke:0.1px;letter-spacing:0.3px;">SAB</span>
<span class="t" style="left:780.72px;top:455.00px;font-size:8px;color:#c9ccd1;-webkit-text-stroke:0.1px;letter-spacing:0.3px;">VCB</span>
<span class="t" style="left:216.00px;top:512.00px;font-size:8.4px;color:#ffffff;font-weight:700;transform:scaleX(0.9166);transform-origin:0 0;">Tất cả</span>
<span class="t" style="left:258.85px;top:512.00px;font-size:8.4px;color:#e4e4e4;font-weight:700;transform:scaleX(0.9420);transform-origin:0 0;">Lệnh nhỏ</span>
<span class="t" style="left:314.40px;top:512.00px;font-size:8.4px;color:#e4e4e4;font-weight:700;transform:scaleX(0.9067);transform-origin:0 0;">Lệnh vừa</span>
<span class="t" style="left:369.35px;top:512.00px;font-size:8.4px;color:#e4e4e4;font-weight:700;transform:scaleX(0.9521);transform-origin:0 0;">Lệnh to</span>
<span class="t" style="left:694.25px;top:512.00px;font-size:8.4px;color:#ffffff;font-weight:700;">30 phút</span>
<span class="t" style="left:744.00px;top:512.00px;font-size:8.4px;color:#e4e4e4;font-weight:700;transform:scaleX(0.9563);transform-origin:0 0;">2 giờ</span>
<span class="t" style="left:783.50px;top:512.00px;font-size:8.4px;color:#e4e4e4;font-weight:700;transform:scaleX(0.9606);transform-origin:0 0;">1 ngày</span>
<span class="t" style="left:27.20px;top:19.00px;font-size:13.5px;color:#ffffff;font-weight:700;transform:scaleX(0.9069);transform-origin:0 0;-webkit-text-stroke:0.18px #000;">VPBank Securities</span>
<span class="t" style="left:151.70px;top:22.00px;font-size:11px;color:#ececec;-webkit-text-stroke:0.3px;transform:scaleX(0.9380);transform-origin:0 0;">Bảng gi</span>
<span class="t" style="left:321.80px;top:22.00px;font-size:11px;color:#ececec;-webkit-text-stroke:0.3px;transform:scaleX(0.8889);transform-origin:0 0;">Cơ sở</span>
<span class="t" style="left:379.80px;top:22.00px;font-size:11px;color:#ececec;-webkit-text-stroke:0.3px;transform:scaleX(0.9673);transform-origin:0 0;">Sản phẩm Wealth</span>
<span class="t" style="left:494.70px;top:22.00px;font-size:11px;color:#ececec;-webkit-text-stroke:0.3px;transform:scaleX(0.9901);transform-origin:0 0;">Giao dịch tiền</span>
<span class="t" style="left:591.60px;top:22.00px;font-size:11px;color:#ececec;-webkit-text-stroke:0.3px;transform:scaleX(0.9036);transform-origin:0 0;">Tài sản</span>
<span class="t" style="left:654.20px;top:22.00px;font-size:11px;color:#ececec;-webkit-text-stroke:0.3px;transform:scaleX(0.9306);transform-origin:0 0;">Trợ giúp</span>
<span class="t" style="left:6.20px;top:49.00px;font-size:9.6px;color:#ffffff;font-weight:700;transform:scaleX(0.9036);transform-origin:0 0;">Tổng quan thị trường</span>
<span class="t" style="left:1137.50px;top:15.00px;font-size:9.3px;color:#e6e6e6;-webkit-text-stroke:0.22px;transform:scaleX(1.0165);transform-origin:100% 0;">16:39:35</span>
<span class="t" style="left:1127.17px;top:26.00px;font-size:9.3px;color:#e6e6e6;-webkit-text-stroke:0.22px;transform:scaleX(1.1132);transform-origin:100% 0;">22/02/2024</span>
<svg style="position:absolute;left:0;top:0" width="40" height="40" viewBox="0 0 40 40">
<path d="M15.8,30.1 C12,28.6 8.2,24.8 6.6,20.2 C8.8,19.8 10.8,20.2 12.4,21.2 C11.3,19 11.0,16.4 11.4,14 C13.4,15.1 14.9,16.6 15.8,18.4 C16.7,16.6 18.2,15.1 20.2,14 C20.6,16.4 20.3,19 19.2,21.2 C20.8,20.2 22.8,19.8 25,20.2 C23.4,24.8 19.6,28.6 15.8,30.1 Z" fill="#e21c27"/>
<path d="M15.8,30 L15.8,24.4 M15.8,24.6 L13.2,21.2 M15.8,24.6 L18.4,21.2" stroke="#fff" stroke-width="0.7" fill="none" opacity="0.85"/><path d="M15.8,24.4 L15.8,18.6" stroke="#ffd0d0" stroke-width="0.4" fill="none" opacity="0.7"/>
</svg><svg style="position:absolute;left:60px;top:15px" width="20" height="20"><line x1="9.5" y1="11.4" x2="12.1" y2="8.2" stroke="#e21c27" stroke-width="1.3"/></svg>
<svg style="position:absolute;left:0;top:0" width="1251" height="60" viewBox="0 0 1251 60">
<path d="M1098.4,23.4 A10.2,10.2 0 0 1 1113.2,23.4" fill="none" stroke="#22b04e" stroke-width="1.8" stroke-linecap="round"/>
<path d="M1101.1,26 A6.5,6.5 0 0 1 1110.5,26" fill="none" stroke="#22b04e" stroke-width="1.8" stroke-linecap="round"/>
<path d="M1103.6,28.3 A3.1,3.1 0 0 1 1108,28.3" fill="none" stroke="#22b04e" stroke-width="1.7" stroke-linecap="round"/>
<circle cx="1105.8" cy="30.2" r="1.15" fill="#22b04e"/>
<rect x="1179.2" y="14" width="1.6" height="22" fill="#b4b4b4"/>
<circle cx="1196.7" cy="23.5" r="9.6" fill="#2c2f38"/>
<circle cx="1221.5" cy="23.5" r="9.6" fill="#2c2f38"/>
<circle cx="1247.5" cy="23.5" r="9.6" fill="#2c2f38"/>
<!-- icon 1: person + bubble -->
<circle cx="1194.8" cy="23.4" r="1.7" fill="#fff"/>
<path d="M1191.8,28.2 q0,-2.7 3,-2.7 q3,0 3,2.7 z" fill="#fff"/>
<path d="M1197.3,19.1 h4.8 v3.3 h-3.1 l-1.7,1.3 z" fill="none" stroke="#fff" stroke-width="0.8"/><rect x="1198.6" y="20" width="2.4" height="1.3" fill="#fff"/>
<!-- bell -->
<path d="M1217.3,26.6 q1.1,-1 1.1,-3.6 q0,-3.6 3.1,-3.6 q3.1,0 3.1,3.6 q0,2.6 1.1,3.6 z" fill="#fff"/>
<rect x="1220.6" y="27" width="1.8" height="1.5" rx="0.7" fill="#fff"/>
<!-- person -->
<circle cx="1247.3" cy="21" r="2.4" fill="#fff"/>
<path d="M1242.6,28.8 q0,-4 4.7,-4 q4.7,0 4.7,4 z" fill="#fff"/>
<rect x="1223.5" y="8.8" width="13.9" height="10.3" rx="5.1" fill="#ef3a45"/>
</svg>
<!-- inner scrollbar -->
<div style="position:absolute;left:1241px;top:113px;width:9px;height:171px;background:#2e2e2e"></div>
<svg style="position:absolute;left:1241px;top:66px" width="9" height="6"><polygon points="1.8,4.8 4.5,2 7.2,4.8" fill="#4a4a4a"/></svg>
<svg style="position:absolute;left:1241px;top:523px" width="9" height="6"><polygon points="1.8,2 4.5,4.8 7.2,2" fill="#4a4a4a"/></svg>
<!-- footer -->
<div style="position:absolute;left:0;top:527px;width:1251.2px;height:10px;background:#0c121c;border-top:1px solid #444b59;box-sizing:border-box;border-right:1px solid #444b59"></div>
<div style="position:absolute;left:12.5px;top:531.1px;width:64.5px;height:10px;background:#22b04e;border-radius:3px"></div>
<span class="t" style="left:95px;top:535.5px;font-size:9.5px;color:#9a9ea6;word-spacing:22px">Sổ lệnh thường Lệnh điều kiện Danh mục Tổng hợp tài sản Lịch sử đặt lệnh</span>
<div style="position:absolute;left:1219.5px;top:534.3px;width:19px;height:6px;background:#000;border-radius:3px"></div>
<!-- dropdown -->
<div style="position:absolute;left:205.4px;top:46.3px;width:182.8px;height:137.4px;background:#343842;border-radius:3px;overflow:hidden">
  <div style="position:absolute;left:0;top:0;width:100%;height:5.6px;background:#3a3e49"></div>
  <div style="position:absolute;left:0;top:5.5px;width:100%;height:31px;background:#4d5360"></div>
</div>
<svg style="position:absolute;left:360px;top:60px" width="20" height="16"><polyline points="4.6,8.0 7.5,10.9 13.8,4.3" fill="none" stroke="#fff" stroke-width="1.5"/></svg>
<!-- annotation boxes -->
<div style="position:absolute;left:187px;top:9px;width:24px;height:34px;background:#000"></div>
<div style="position:absolute;left:187px;top:-0.3px;width:149px;height:47px;border:5px solid #50bd6c;box-sizing:border-box"></div>
<div style="position:absolute;left:206.2px;top:43px;width:149.1px;height:45.8px;border:5px solid #50bd6c;box-sizing:border-box"></div>
<svg style="position:absolute;left:0;top:0" width="400" height="40"><polygon points="295.2,26.1 298.2,26.1 296.7,27.7" fill="#22b04e"/></svg>
<span class="t" style="left:211.70px;top:22.00px;font-size:11px;color:#22b04e;-webkit-text-stroke:0.3px;transform:scaleX(0.9868);transform-origin:0 0;">Phân tích đầu tư</span>
<span class="t" style="left:217.60px;top:61.00px;font-size:12px;color:#e9eaec;-webkit-text-stroke:0.38px;transform:scaleX(0.9267);transform-origin:0 0;">Thông tin thị trường</span>
<span class="t" style="left:217.60px;top:93.00px;font-size:12px;color:#e9eaec;-webkit-text-stroke:0.38px;transform:scaleX(0.9018);transform-origin:0 0;">Bộ lọc cổ phiếu</span>
<span class="t" style="left:217.60px;top:124.00px;font-size:12px;color:#e9eaec;-webkit-text-stroke:0.38px;transform:scaleX(0.9179);transform-origin:0 0;">Biểu đồ kỹ thuật</span>
<span class="t" style="left:217.60px;top:156.00px;font-size:12px;color:#e9eaec;-webkit-text-stroke:0.38px;transform:scaleX(0.8959);transform-origin:0 0;">Danh mục đầu tư mẫu</span>
<span class="t" style="left:1225.83px;top:11.00px;font-size:8.2px;color:#ffffff;-webkit-text-stroke:0.1px;">9+</span>
</div>
<!-- outer scrollbar arrow -->
<svg style="position:absolute;left:1252px;top:10px" width="10" height="8"><polygon points="2.2,4.8 4.7,2.3 7.2,4.8" fill="#555"/></svg>
</body></html>
